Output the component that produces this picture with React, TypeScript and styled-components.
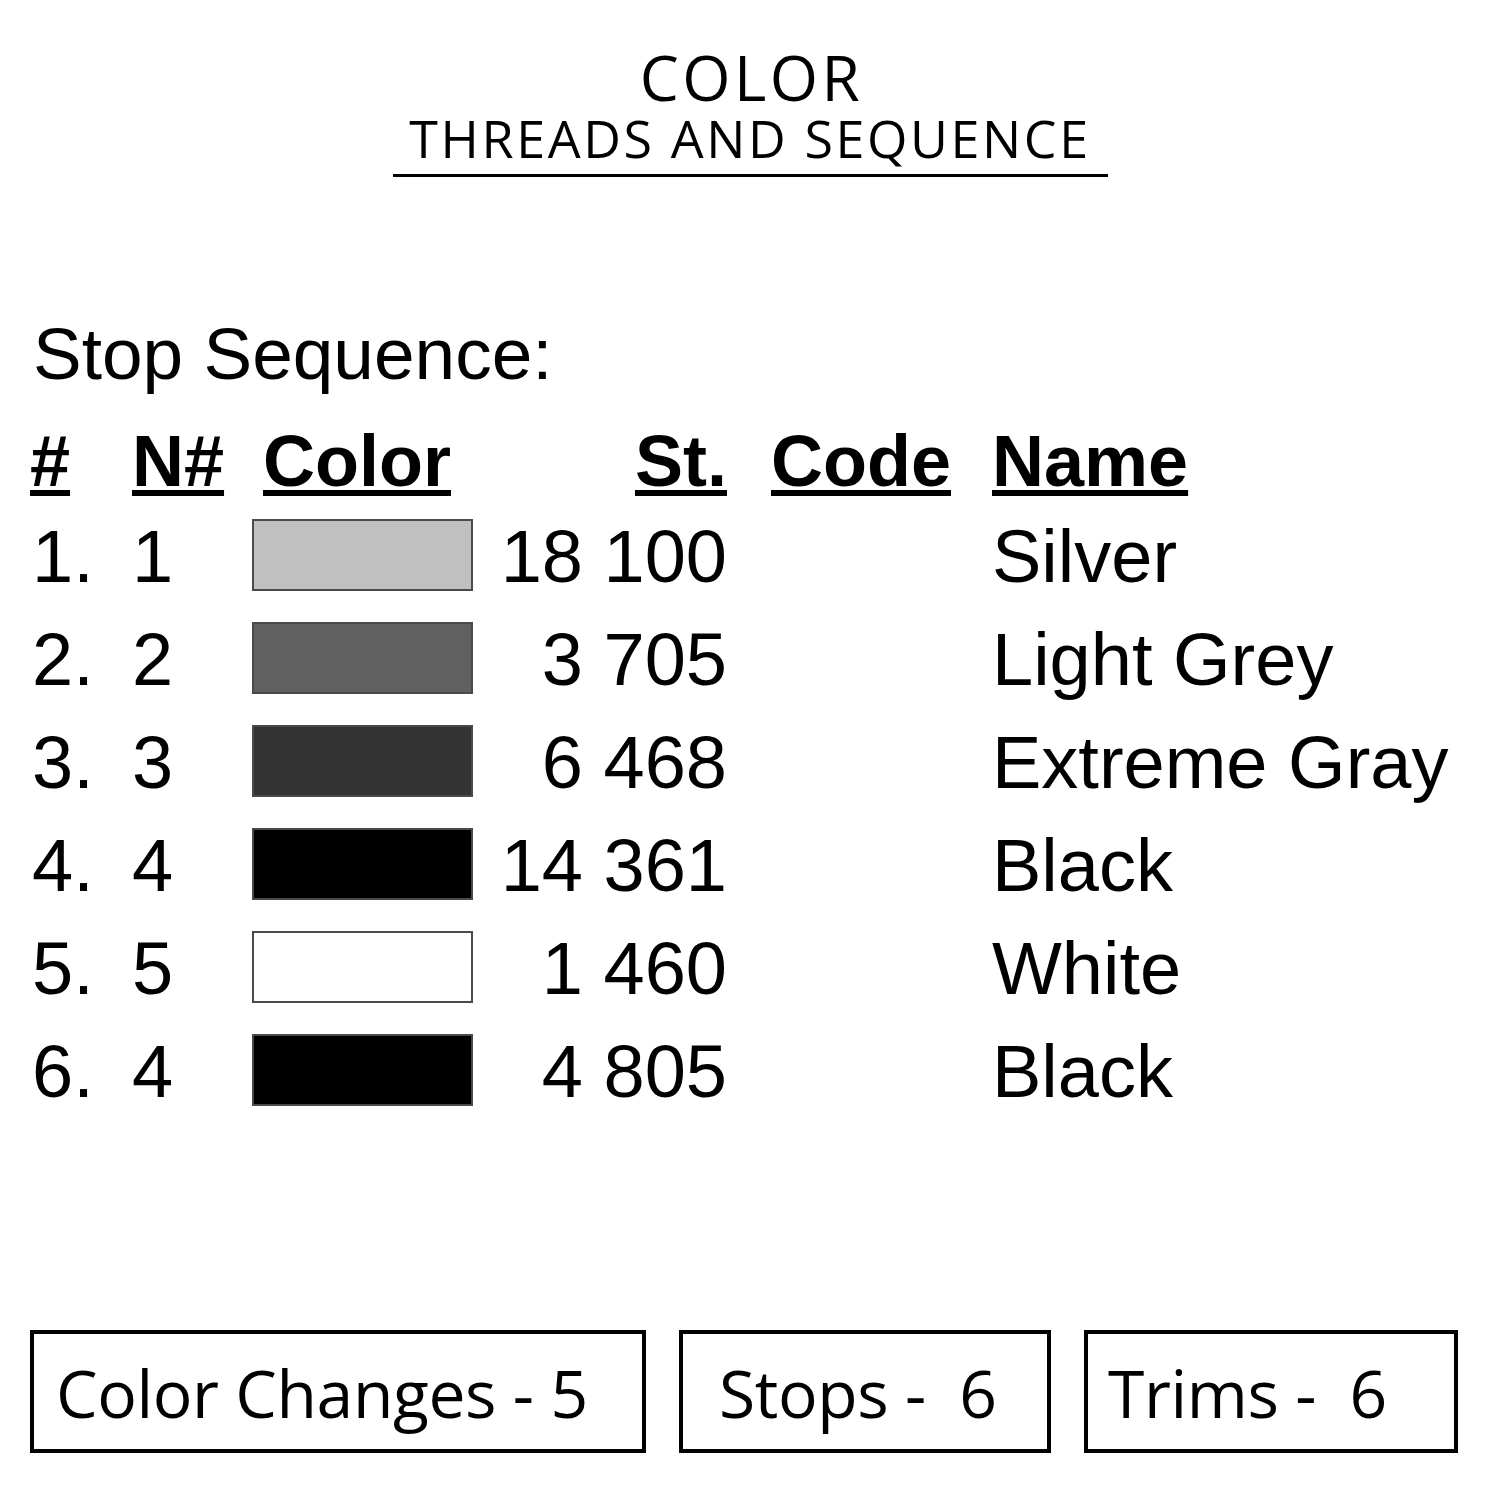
import React from "react";
import styled, { createGlobalStyle } from "styled-components";

const Global = createGlobalStyle`
	html, body {
		margin: 0;
		padding: 0;
		background: #fff;
	}
	body {
		font-family: "Liberation Sans", Arial, sans-serif;
		color: #000;
	}
`;

const Page = styled.div`
	width: 1500px;
	height: 1500px;
	display: flex;
	flex-direction: column;
	box-sizing: border-box;
`;

const Heading = styled.header`
	display: flex;
	flex-direction: column;
	align-items: center;
	padding-top: 46px;
`;

const Title = styled.h1`
	margin: 0;
	font-family: "Open Sans", sans-serif;
	font-weight: 500;
	font-size: 62px;
	line-height: 62px;
	letter-spacing: 3.5px;
	padding-left: 3px;
`;

const Subtitle = styled.h2`
	margin: 4px 0 0;
	font-family: "Open Sans", sans-serif;
	font-weight: 400;
	font-size: 52px;
	line-height: 52px;
	letter-spacing: 2.6px;
`;

const Rule = styled.div`
	width: 715px;
	height: 3px;
	margin-top: 10px;
	background: #000;
`;

const Section = styled.section`
	padding: 0 0 0 30px;
	margin-top: 141px;
`;

const SectionTitle = styled.div`
	font-size: 73px;
	line-height: 72px;
	padding-left: 3px;
`;

const Grid = styled.div`
	display: grid;
	grid-template-columns: 100px 122px 221px 254px 265px 1fr;
	align-items: center;
	font-size: 74px;
	margin-top: 35px;
`;

const Head = styled.div<{ $right?: boolean; $pad?: number }>`
	font-weight: 700;
	font-size: 72px;
	line-height: 72px;
	height: 80px;
	text-align: ${p => (p.$right ? "right" : "left")};
	padding-left: ${p => p.$pad ?? 0}px;
	align-self: start;

	span {
		text-decoration: underline;
		text-decoration-thickness: 6px;
		text-underline-offset: 4px;
	}
`;

const Cell = styled.div<{ $right?: boolean; $pad?: number }>`
	line-height: 103px;
	height: 103px;
	text-align: ${p => (p.$right ? "right" : "left")};
	padding-left: ${p => p.$pad ?? 0}px;
	white-space: nowrap;
`;

const Swatch = styled.div<{ $fill: string }>`
	width: 221px;
	height: 72px;
	box-sizing: border-box;
	background: ${p => p.$fill};
	border: 2px solid #4a4a4a;
	margin-top: -4px;
`;

const Footer = styled.footer`
	margin-top: auto;
	margin-bottom: 47px;
	display: flex;
	gap: 33px;
	padding-left: 30px;
`;

const StatBox = styled.div<{ $width: number; $pad: number }>`
	width: ${p => p.$width}px;
	height: 123px;
	box-sizing: border-box;
	border: 4px solid #000;
	display: flex;
	align-items: center;
	padding-left: ${p => p.$pad}px;
	font-family: "Open Sans", "Noto Sans", sans-serif;
	font-size: 66px;
	letter-spacing: -0.4px;
	white-space: pre;
`;

const rows = [
	{ n: 1, needle: 1, fill: "#c0c0c0", st: "18 100", name: "Silver" },
	{ n: 2, needle: 2, fill: "#606060", st: "3 705", name: "Light Grey" },
	{ n: 3, needle: 3, fill: "#333333", st: "6 468", name: "Extreme Gray" },
	{ n: 4, needle: 4, fill: "#000000", st: "14 361", name: "Black" },
	{ n: 5, needle: 5, fill: "#ffffff", st: "1 460", name: "White" },
	{ n: 6, needle: 4, fill: "#000000", st: "4 805", name: "Black" },
];

export default function App() {
	return (
		<Page>
			<Global />
			<Heading>
				<Title>COLOR</Title>
				<Subtitle>THREADS AND SEQUENCE</Subtitle>
				<Rule />
			</Heading>

			<Section>
				<SectionTitle>Stop Sequence:</SectionTitle>
				<Grid>
					<Head><span>#</span></Head>
					<Head $pad={2}><span>N#</span></Head>
					<Head $pad={11}><span>Color</span></Head>
					<Head $right><span>St.</span></Head>
					<Head $pad={44}><span>Code</span></Head>
					<Head><span>Name</span></Head>
					{rows.map(r => (
						<React.Fragment key={r.n}>
							<Cell $pad={2}>{r.n}.</Cell>
							<Cell $pad={2}>{r.needle}</Cell>
							<Swatch $fill={r.fill} />
							<Cell $right>{r.st}</Cell>
							<Cell />
							<Cell>{r.name}</Cell>
						</React.Fragment>
					))}
				</Grid>
			</Section>

			<Footer>
				<StatBox $width={616} $pad={22}>Color Changes - 5</StatBox>
				<StatBox $width={372} $pad={36}>Stops -  6</StatBox>
				<StatBox $width={374} $pad={20}>Trims -  6</StatBox>
			</Footer>
		</Page>
	);
}
